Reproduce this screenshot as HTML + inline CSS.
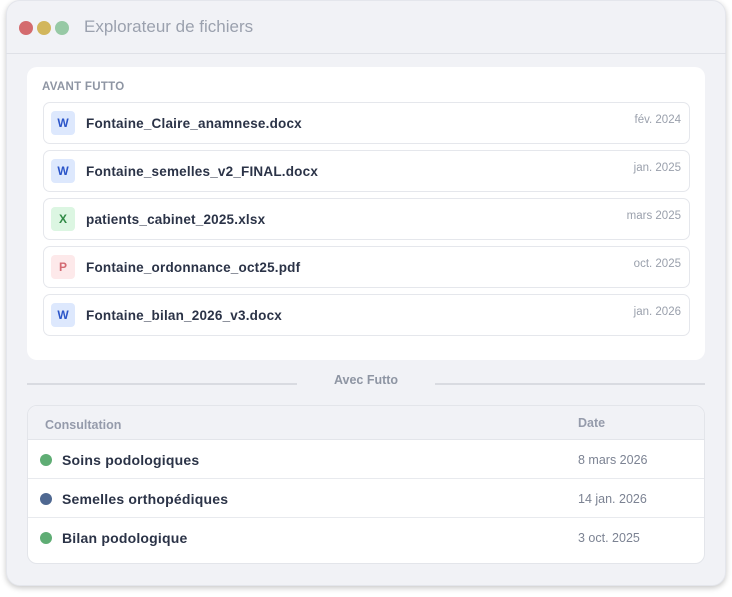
<!DOCTYPE html>
<html><head><meta charset="utf-8"><style>
*{margin:0;padding:0;box-sizing:border-box}
body{width:732px;height:597px;background:#fff;font-family:"Liberation Sans",sans-serif;position:relative;overflow:hidden}
.win{position:absolute;left:6px;top:0;width:720px;height:586px;background:#f1f2f6;border-radius:14px;box-shadow:0 2px 6px rgba(0,0,0,.22);border:1px solid #e4e6ec}
.tb{position:absolute;left:-1px;top:0;width:720px;height:53px;border-bottom:1px solid #dfe1e7}
.dot{position:absolute;top:20px;width:14px;height:14px;border-radius:50%}
.title{position:absolute;left:78px;top:16px;font-size:17px;color:#9ba1ae}
.card{position:absolute;left:20px;top:66px;width:678px;height:293px;background:#fff;border-radius:10px}
.lbl{position:absolute;left:15px;top:14px;font-size:11.5px;font-weight:bold;color:#8e95a3;letter-spacing:.3px}
.row{position:absolute;left:16px;width:647px;height:42px;border:1px solid #e5e7ec;border-radius:7px}
.ic{position:absolute;left:7px;top:8px;width:24px;height:24px;border-radius:4px;font-size:12px;font-weight:bold;text-align:center;line-height:24px}
.fn{position:absolute;left:42px;top:13px;font-size:13.5px;font-weight:bold;color:#2b3347;letter-spacing:.2px}
.dt{position:absolute;right:8px;top:11px;font-size:11.5px;color:#9aa0ac}
.w{background:#dde8fd;color:#2b55c9}.x{background:#dcf6e2;color:#2f8a45}.p{background:#fde9ea;color:#d46a72}
.sep{position:absolute;top:382px;height:2px;background:#d9dbe1}
.avec{position:absolute;left:-1px;width:720px;text-align:center;top:372px;font-size:12.5px;font-weight:bold;color:#8e95a3}
.tbl{position:absolute;left:20px;top:404px;width:678px;height:159px;background:#fff;border:1px solid #e3e5ea;border-radius:10px;overflow:hidden}
.th{position:absolute;left:0;top:0;width:100%;height:34px;background:#f1f2f6;border-bottom:1px solid #e3e5ea}
.th span{position:absolute;top:12px;font-size:12.5px;font-weight:bold;color:#959bab}
.tr{position:absolute;left:0;width:100%;height:39px;border-bottom:1px solid #e8eaee}
.tr .b{position:absolute;left:12px;top:14px;width:12px;height:12px;border-radius:50%}
.tr .n{position:absolute;left:34px;top:12px;font-size:14px;font-weight:bold;color:#2b3347;letter-spacing:.2px}
.tr .d{position:absolute;left:550px;top:13px;font-size:12.5px;color:#7c8393}
</style></head><body>
<div class="win">
<div class="tb">
<div class="dot" style="left:13px;background:#d46b6e"></div>
<div class="dot" style="left:31px;background:#d2b65c"></div>
<div class="dot" style="left:49px;background:#97c9a5"></div>
<div class="title">Explorateur de fichiers</div>
</div>
<div class="card">
<div class="lbl">AVANT FUTTO</div>
<div class="row" style="top:35px"><div class="ic w">W</div><div class="fn">Fontaine_Claire_anamnese.docx</div><div class="dt">fév. 2024</div></div>
<div class="row" style="top:83px"><div class="ic w">W</div><div class="fn">Fontaine_semelles_v2_FINAL.docx</div><div class="dt">jan. 2025</div></div>
<div class="row" style="top:131px"><div class="ic x">X</div><div class="fn">patients_cabinet_2025.xlsx</div><div class="dt">mars 2025</div></div>
<div class="row" style="top:179px"><div class="ic p">P</div><div class="fn">Fontaine_ordonnance_oct25.pdf</div><div class="dt">oct. 2025</div></div>
<div class="row" style="top:227px"><div class="ic w">W</div><div class="fn">Fontaine_bilan_2026_v3.docx</div><div class="dt">jan. 2026</div></div>
</div>
<div class="sep" style="left:20px;width:270px"></div>
<div class="sep" style="left:428px;width:270px"></div>
<div class="avec">Avec Futto</div>
<div class="tbl">
<div class="th"><span style="left:17px;top:12px">Consultation</span><span style="left:550px;top:10px">Date</span></div>
<div class="tr" style="top:34px"><div class="b" style="background:#5fad74"></div><div class="n">Soins podologiques</div><div class="d">8 mars 2026</div></div>
<div class="tr" style="top:73px"><div class="b" style="background:#4f6891"></div><div class="n">Semelles orthopédiques</div><div class="d">14 jan. 2026</div></div>
<div class="tr" style="top:112px;border:none"><div class="b" style="background:#5fad74"></div><div class="n">Bilan podologique</div><div class="d">3 oct. 2025</div></div>
</div>
</div>
</body></html>
